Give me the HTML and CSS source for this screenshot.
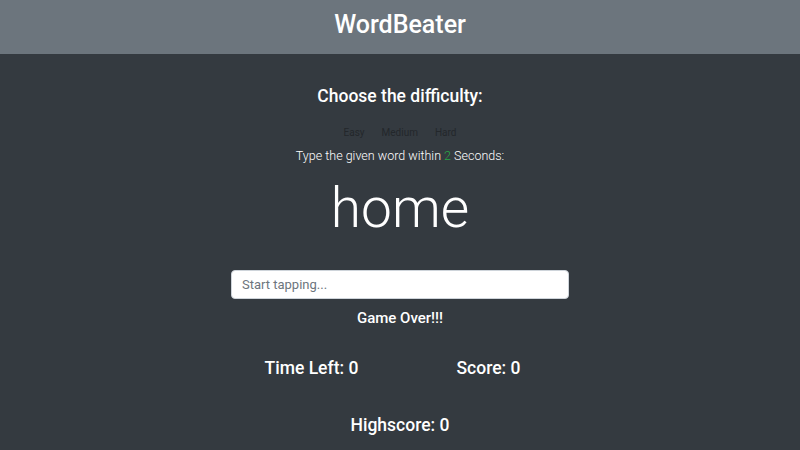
FILE: index.html
```html
<!DOCTYPE html>
<html>
<head>
<meta charset="utf-8">
<link rel="stylesheet" href="styles.css">
</head>
<body>
<header class="topbar">
  <h1 class="brand">WordBeater</h1>
</header>
<main class="game">
  <h2 class="choose">Choose the difficulty:</h2>
  <div class="levels">
    <span class="level">Easy</span>
    <span class="level">Medium</span>
    <span class="level">Hard</span>
  </div>
  <p class="instr">Type the given word within <span class="secs">2</span> Seconds:</p>
  <div class="word">home</div>
  <input class="entry" type="text" placeholder="Start tapping...">
  <p class="message">Game Over!!!</p>
  <div class="stats">
    <div class="stat">Time Left: 0</div>
    <div class="stat">Score: 0</div>
  </div>
  <div class="high">Highscore: 0</div>
</main>
</body>
</html>
```
FILE: styles.css
```css
html, body {
  margin: 0;
  padding: 0;
  height: 100%;
}
body {
  background: #343a40;
  color: #fff;
  font-family: Roboto, "Liberation Sans", sans-serif;
}
.topbar {
  background: #6c757d;
  height: 54px;
  display: flex;
  align-items: center;
  justify-content: center;
}
.brand {
  margin: 0;
  font-size: 25px;
  font-weight: 500;
  line-height: 1;
  position: relative;
  top: -3px;
}
.game {
  display: flex;
  flex-direction: column;
  align-items: center;
}
.choose {
  margin: 31px 0 0;
  font-size: 17.5px;
  font-weight: 500;
  line-height: 22px;
}
.levels {
  display: flex;
  gap: 17px;
  margin-top: 20px;
  font-size: 10px;
  line-height: 12px;
  color: #23272b;
}
.instr {
  margin: 9px 0 0;
  font-size: 12.5px;
  font-weight: 300;
  line-height: 16px;
}
.secs {
  color: #28a745;
}
.word {
  margin-top: 11px;
  font-size: 55px;
  font-weight: 300;
  line-height: 66px;
}
.entry {
  margin-top: 29px;
  width: 338px;
  height: 29px;
  box-sizing: border-box;
  border: 1px solid #ced4da;
  border-radius: 4px;
  padding: 0 10px;
  font-family: Roboto, "Liberation Sans", sans-serif;
  font-size: 13px;
  color: #495057;
  background: #fff;
  outline: none;
}
.entry::placeholder {
  color: #6c757d;
}
.message {
  margin: 10px 0 0;
  font-size: 15px;
  font-weight: 500;
  line-height: 18px;
}
.stats {
  display: grid;
  grid-template-columns: 177px 177px;
  margin-top: 31px;
}
.stat {
  text-align: center;
  font-size: 17.5px;
  font-weight: 500;
  line-height: 20px;
}
.high {
  margin-top: 37px;
  font-size: 17.5px;
  font-weight: 500;
  line-height: 20px;
}
```
